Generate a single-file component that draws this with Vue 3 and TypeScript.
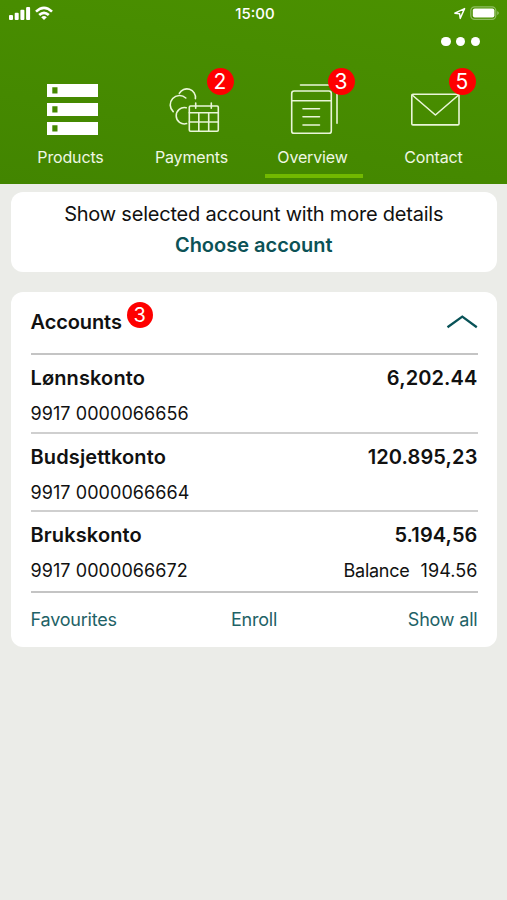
<script setup lang="ts">
type TabIcon = 'products' | 'payments' | 'overview' | 'contact'

interface Tab {
  label: string
  icon: TabIcon
  badge?: number
  active?: boolean
}

interface Account {
  name: string
  amount: string
  number: string
  balance?: string
}

const tabs: Tab[] = [
  { label: 'Products', icon: 'products' },
  { label: 'Payments', icon: 'payments', badge: 2 },
  { label: 'Overview', icon: 'overview', badge: 3, active: true },
  { label: 'Contact', icon: 'contact', badge: 5 },
]

const accounts: Account[] = [
  { name: 'Lønnskonto', amount: '6,202.44', number: '9917 0000066656' },
  { name: 'Budsjettkonto', amount: '120.895,23', number: '9917 0000066664' },
  { name: 'Brukskonto', amount: '5.194,56', number: '9917 0000066672', balance: '194.56' },
]
</script>

<template>
  <div class="screen">
    <header class="header">
      <div class="status">
        <svg class="signal" width="46" height="16" viewBox="0 0 46 16" fill="#fff">
          <rect x="0" y="9" width="4" height="5" rx="1" />
          <rect x="5.7" y="6.8" width="4" height="7.2" rx="1" />
          <rect x="11.4" y="3.8" width="4" height="10.2" rx="1" />
          <rect x="17.1" y="1" width="4" height="13" rx="1" />
          <g fill="none" stroke="#fff" stroke-width="2.6">
            <path d="M27 5.6Q35 -2 43 5.6" />
            <path d="M30.2 9Q35 4.6 39.8 9" />
          </g>
          <path d="M32.2 11.2Q35 9 37.8 11.2L35 14Z" />
        </svg>
        <span class="time">15:00</span>
        <svg class="power" width="48" height="16" viewBox="0 0 48 16">
          <path d="M1.8 7.2L11.6 2.6L7.2 12.4L6.6 7.8Z" fill="none" stroke="#fff" stroke-width="1.4" stroke-linejoin="round" />
          <rect x="17.8" y="0.8" width="25" height="12.6" rx="3.8" fill="none" stroke="#8fbd62" stroke-width="1.2" />
          <rect x="19.8" y="2.6" width="21.6" height="9" rx="2" fill="#fff" />
          <path d="M44.4 5Q47 7 44.4 9.2Z" fill="#a5ca80" />
        </svg>
      </div>

      <div class="more"><i /><i /><i /></div>

      <nav class="tabs">
        <div v-for="tab in tabs" :key="tab.label" class="tab" :class="{ active: tab.active }">
          <svg class="icon" width="61" height="61" viewBox="0 0 61 61">
            <template v-if="tab.icon === 'products'">
              <g fill="#fff">
                <path fill-rule="evenodd" d="M7 6H58V19H7ZM12.3 9.3V15.6H17.5V9.3Z" />
                <path fill-rule="evenodd" d="M7 25H58V38H7ZM12.3 28.3V34.6H17.5V28.3Z" />
                <path fill-rule="evenodd" d="M7 44H58V57H7ZM12.3 47.3V53.6H17.5V47.3Z" />
              </g>
            </template>
            <g v-else-if="tab.icon === 'payments'" class="line">
              <rect x="28.3" y="28" width="29" height="25.2" rx="1.2" />
              <path d="M28.3 34.8H57.3M28.3 44H57.3M37.8 34.8V53.2M47.7 34.8V53.2M34.7 25V30.2M50.3 25V30.2" />
              <path d="M18.3 15.4A8.6 8.6 0 0 1 34.4 20.6" />
              <path d="M24.8 20A8.9 8.9 0 0 0 12.2 33.6" />
              <path d="M25.2 29.7A8.2 8.2 0 1 0 25.6 45.6" />
            </g>
            <g v-else-if="tab.icon === 'overview'" class="line">
              <rect x="9.7" y="13" width="39.6" height="42.3" rx="2.4" />
              <path d="M9.7 22.7H49.3M21 30.7H37.5M21 38.7H37.5M21 47H37.5M18.5 7H50M55 12V45.2" />
            </g>
            <g v-else class="line">
              <rect x="8.8" y="16.2" width="47.2" height="30.7" rx="1.2" />
              <path d="M9.2 17L32.4 37L55.6 17" />
            </g>
          </svg>
          <span v-if="tab.badge" class="badge tab-badge">{{ tab.badge }}</span>
          <span class="label">{{ tab.label }}</span>
          <span class="bar" />
        </div>
      </nav>
    </header>

    <main class="content">
      <section class="card intro">
        <p class="hint">Show selected account with more details</p>
        <a class="choose">Choose account</a>
      </section>

      <section class="card accounts">
        <div class="head">
          <h2>Accounts</h2>
          <span class="badge head-badge">3</span>
          <svg class="chevron" width="32" height="16" viewBox="0 0 32 16">
            <path d="M1.5 13.2L16.3 2.6L30.8 13.2" fill="none" stroke="#085257" stroke-width="2.3" />
          </svg>
        </div>
        <div v-for="account in accounts" :key="account.number" class="account">
          <div class="line-main">
            <span>{{ account.name }}</span>
            <span class="amount">{{ account.amount }}</span>
          </div>
          <div class="line-sub">
            <span>{{ account.number }}</span>
            <span v-if="account.balance" class="balance"><span>Balance</span><span>{{ account.balance }}</span></span>
          </div>
        </div>
        <div class="links">
          <a>Favourites</a>
          <a>Enroll</a>
          <a>Show all</a>
        </div>
      </section>
    </main>
  </div>
</template>

<style>
body {
  background: #ebece8;
}
</style>

<style scoped>
.screen {
  min-height: 900px;
  background: #ebece8;
  font-family: Inter, 'Liberation Sans', sans-serif;
  color: #111;
}
.header {
  height: 184px;
  display: flex;
  flex-direction: column;
  background: linear-gradient(10deg, #428500, #4b9100);
  color: #fff;
}
.status {
  height: 27px;
  display: grid;
  grid-template-columns: 1fr auto 1fr;
  align-items: center;
  padding: 0 6px 0 9px;
}
.signal {
  margin-top: 1px;
}
.time {
  font-size: 15px;
  font-weight: 500;
}
.power {
  justify-self: end;
}
.more {
  height: 41px;
  display: flex;
  justify-content: flex-end;
  gap: 5.3px;
  padding: 10px 27px 0 0;
  box-sizing: border-box;
}
.more i {
  width: 9.4px;
  height: 9.4px;
  border-radius: 50%;
  background: #fff;
}
.tabs {
  height: 116px;
  display: grid;
  grid-template-columns: repeat(4, 121px);
  padding-left: 10px;
}
.tab {
  position: relative;
  display: flex;
  flex-direction: column;
  align-items: center;
  padding-top: 10px;
}
.icon {
  display: block;
}
.line {
  fill: none;
  stroke: #e9f6d8;
  stroke-width: 1.6;
  stroke-linecap: round;
  stroke-linejoin: round;
}
.badge {
  display: flex;
  align-items: center;
  justify-content: center;
  border-radius: 50%;
  background: #fe0000;
  color: #fff;
}
.tab-badge {
  position: absolute;
  left: 75.5px;
  top: 0;
  width: 27px;
  height: 27px;
  font-size: 21px;
}
.label {
  margin-top: 8px;
  font-size: 16px;
  line-height: 20px;
  letter-spacing: -0.15px;
  color: #eff7e4;
}
.bar {
  width: 98px;
  height: 4px;
  margin: 7px 0 0 2px;
}
.active .bar {
  background: #72b900;
}
.content {
  padding: 8px 10px 0 10.5px;
  display: flex;
  flex-direction: column;
  gap: 20px;
}
.card {
  background: #fff;
  border-radius: 12px;
  box-sizing: border-box;
}
.intro {
  height: 80px;
  padding-top: 7px;
  display: flex;
  flex-direction: column;
  align-items: center;
}
.hint,
.choose {
  margin: 0;
  font-size: 20px;
  line-height: 30px;
}
.hint {
  letter-spacing: -0.21px;
}
.choose {
  margin-top: 1px;
  font-weight: 600;
  color: #0c5256;
}
.accounts {
  height: 355px;
  padding: 0 19.5px 0 20px;
}
.head {
  height: 63px;
  box-sizing: border-box;
  display: flex;
  align-items: center;
  padding-bottom: 2px;
  border-bottom: 2px solid #c4c4c4;
}
h2 {
  margin: 0;
  font-size: 20px;
  font-weight: 600;
  line-height: 30px;
  letter-spacing: -0.1px;
}
.head-badge {
  width: 26px;
  height: 26px;
  margin: 0 0 13px 5px;
  font-size: 20px;
}
.chevron {
  margin-left: auto;
}
.account {
  height: 78.7px;
  box-sizing: border-box;
  padding-top: 8px;
  border-bottom: 2px solid #cfcfcf;
}
.account:nth-last-child(2) {
  height: 81px;
  border-color: #c4c4c4;
}
.line-main,
.line-sub {
  display: flex;
  justify-content: space-between;
}
.line-main {
  font-size: 20px;
  font-weight: 600;
  line-height: 30px;
  letter-spacing: 0.12px;
}
.line-sub {
  margin-top: 9px;
  font-size: 18px;
  line-height: 24px;
  letter-spacing: 0.07px;
}
.balance {
  display: flex;
  gap: 11px;
}
.balance span:first-child {
  letter-spacing: -0.25px;
}
.links {
  display: grid;
  grid-template-columns: 1fr auto 1fr;
  padding-top: 15px;
  font-size: 18px;
  line-height: 24px;
  letter-spacing: -0.2px;
  color: #1e6266;
}
.links a:last-child {
  text-align: right;
}
</style>
